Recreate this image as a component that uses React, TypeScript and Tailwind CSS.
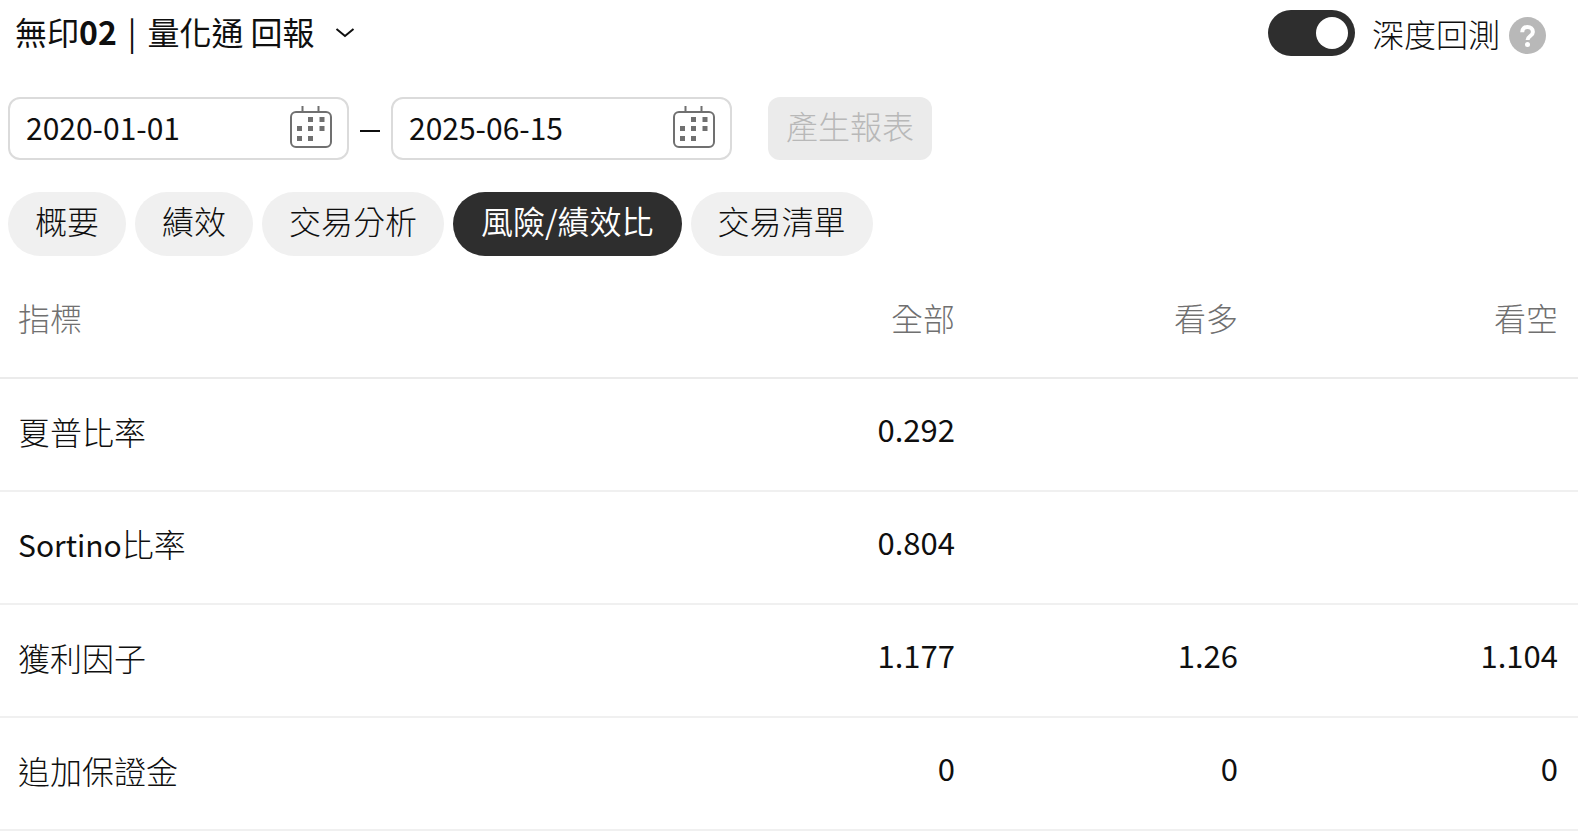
import React, { useState } from "react";

interface Metric {
  name: React.ReactNode;
  all: string;
  long: string;
  short: string;
}

const Tabs: string[] = ["概要", "績效", "交易分析", "風險/績效比", "交易清單"];

const Metrics: Metric[] = [
  { name: "夏普比率", all: "0.292", long: "", short: "" },
  {
    name: (
      <>
        <span className="text-[30px] font-normal">Sortino</span>比率
      </>
    ),
    all: "0.804",
    long: "",
    short: "",
  },
  { name: "獲利因子", all: "1.177", long: "1.26", short: "1.104" },
  { name: "追加保證金", all: "0", long: "0", short: "0" },
];

const CalendarIcon = () => (
  <svg width="42" height="42" viewBox="0 0 42 42" fill="none" aria-hidden="true">
    <rect x="1" y="6" width="40" height="35" rx="5" stroke="#707070" strokeWidth="2" />
    <path d="M12.5 0v6M28.5 0v6" stroke="#707070" strokeWidth="2" />
    <path
      d="M18 11h5v5h-5zM29.5 11h5v5h-5zM7 20h5v5H7zM18 20h5v5h-5zM29.5 20h5v5h-5zM7 30h5v5H7zM18 30h5v5h-5z"
      fill="#707070"
    />
  </svg>
);

const DateField = ({ label, value }: { label: string; value: string }) => {
  const [date, setDate] = useState(value);
  return (
    <div className="flex h-[63px] w-[341px] items-center rounded-xl border-2 border-[#dbdbdb] pr-[15px] pb-1 pl-4">
      <input
        type="text"
        aria-label={label}
        value={date}
        onChange={(e) => setDate(e.target.value)}
        className="min-w-0 flex-1 text-[30px] font-normal outline-none"
      />
      <button type="button" aria-label={`${label} 日曆`}>
        <CalendarIcon />
      </button>
    </div>
  );
};

const App = () => {
  const [active, setActive] = useState(3);
  const [deep, setDeep] = useState(true);

  return (
    <main className="bg-white font-['Noto_Sans_CJK_TC',sans-serif] text-[32px] leading-[46px] font-light text-[#0f0f0f]">
      <header className="flex items-center justify-between pt-[10px] pr-8 pl-[15px] leading-[42px]">
        <h1>
          <button type="button" className="flex items-center gap-5 font-normal">
            <span className="flex gap-[11px] pb-1">
              <span>
                無印<b>02</b>
              </span>
              <span>|</span>
              <span>量化通 回報</span>
            </span>
            <svg width="20" height="12" viewBox="0 0 20 12" fill="none" aria-hidden="true">
              <path d="M1.5 2l8.5 7 8.5-7" stroke="#0f0f0f" strokeWidth="2" />
            </svg>
          </button>
        </h1>
        <div className="flex items-center">
          <input
            id="deep"
            type="checkbox"
            role="switch"
            checked={deep}
            onChange={() => setDeep(!deep)}
            className="flex h-[46px] w-[87px] appearance-none items-center rounded-full bg-[#b8b8b8] px-[7px] before:size-8 before:rounded-full before:bg-white checked:justify-end checked:bg-[#2e2e2e]"
          />
          <label htmlFor="deep" className="pr-[9px] pl-[17px]">
            深度回測
          </label>
          <button type="button" aria-label="說明" className="pt-1">
            <svg width="37" height="37" viewBox="0 0 37 37" fill="none" aria-hidden="true">
              <circle cx="18.5" cy="18.5" r="18.5" fill="#b8b8b8" />
              <path
                d="M13.2 15.2c0-3.4 2.3-5.2 5.3-5.2s5.400 1.800 5.400 4.900c0 4.200-5.300 4-5.300 8.100"
                stroke="#fff"
                strokeWidth="4"
              />
              <circle cx="18.5" cy="27.5" r="2.5" fill="#fff" />
            </svg>
          </button>
        </div>
      </header>

      <form className="flex items-center px-2 pt-[41px]">
        <DateField label="開始日期" value="2020-01-01" />
        <span className="mx-[11px] mt-1 h-[2px] w-5 bg-[#0f0f0f]" />
        <DateField label="結束日期" value="2025-06-15" />
        <button
          type="button"
          disabled
          className="ml-9 h-[63px] rounded-xl bg-[#ebebeb] px-[18px] pb-2 text-[#b8b8b8]"
        >
          產生報表
        </button>
      </form>

      <nav className="flex gap-[9px] px-2 pt-8">
        {Tabs.map((title, id: number) => (
          <button
            key={id}
            type="button"
            onClick={() => setActive(id)}
            className={
              id === active
                ? "h-16 rounded-full bg-[#2e2e2e] px-7 pb-2 font-[350] text-white"
                : "h-16 rounded-full bg-[#f0f0f0] px-[27px] pb-2"
            }
          >
            {title}
          </button>
        ))}
      </nav>

      <table className="w-full table-fixed border-collapse">
        <thead>
          <tr className="h-[122px] border-b-2 border-[#ebebeb] text-[#707070]">
            <th className="pl-[18px] text-left font-light">指標</th>
            <th className="w-[283px] pr-5 text-right font-light">全部</th>
            <th className="w-[283px] pr-5 text-right font-light">看多</th>
            <th className="w-[320px] pr-5 text-right font-light">看空</th>
          </tr>
        </thead>
        <tbody>
          {Metrics.map((row, id: number) => (
            <tr key={id} className="h-[113px] border-b-2 border-[#f0f0f0]">
              <th scope="row" className="pb-2 pl-[18px] text-left font-light">
                {row.name}
              </th>
              <td className="pr-5 pb-3 text-right text-[31px] font-normal">{row.all}</td>
              <td className="pr-5 pb-3 text-right text-[31px] font-normal">{row.long}</td>
              <td className="pr-5 pb-3 text-right text-[31px] font-normal">{row.short}</td>
            </tr>
          ))}
        </tbody>
      </table>
    </main>
  );
};

export default App;
